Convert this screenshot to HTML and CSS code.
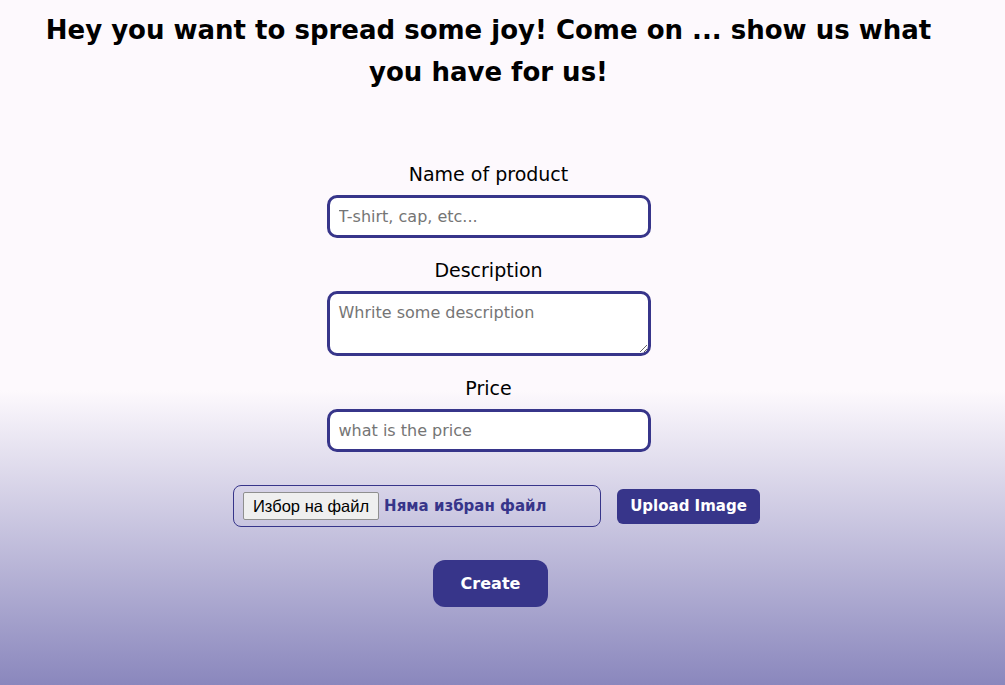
FILE: index.html
```html
<!DOCTYPE html>
<html lang="en">
<head>
<meta charset="utf-8">
<title>Create product</title>
<link rel="stylesheet" href="styles.css">
</head>
<body>
<main class="page">
  <h1 class="title">Hey you want to spread some joy! Come on ... show us what you have for us!</h1>
  <form class="form">
    <label class="label" for="name">Name of product</label>
    <input class="field" id="name" type="text" placeholder="T-shirt, cap, etc...">
    <label class="label label-gap" for="desc">Description</label>
    <textarea class="field area" id="desc" placeholder="Whrite some description"></textarea>
    <label class="label label-gap" for="price">Price</label>
    <input class="field" id="price" type="text" placeholder="what is the price">
    <div class="upload-row">
      <div class="file-box">
        <span class="file-btn">Избор на файл</span>
        <span class="file-name">Няма избран файл</span>
      </div>
      <button type="button" class="upload-btn">Upload Image</button>
    </div>
    <button type="button" class="create-btn">Create</button>
  </form>
</main>
</body>
</html>
```
FILE: styles.css
```css
html, body {
  margin: 0;
  padding: 0;
}
body {
  height: 685px;
  background: linear-gradient(to bottom, #fdf9fd 0%, #fdf9fd 57%, #8a87bd 100%);
  font-family: "Comic Sans MS", "DejaVu Sans", sans-serif;
  color: #000;
}
.page {
  width: 961px;
  margin-left: 8px;
  display: flex;
  flex-direction: column;
  align-items: center;
}
.title {
  margin: 9px 0 0;
  font-size: 26px;
  line-height: 42px;
  font-weight: bold;
  text-align: center;
  width: 930px;
}
.form {
  margin-top: 67px;
  display: flex;
  flex-direction: column;
  align-items: center;
}
.label {
  font-size: 19px;
  line-height: 28px;
  margin-bottom: 7px;
}
.label-gap {
  margin-top: 18px;
}
.field {
  box-sizing: border-box;
  width: 324px;
  height: 43px;
  border: 3px solid #37358a;
  border-radius: 10px;
  background: #fff;
  padding: 0 9px;
  font-family: inherit;
  font-size: 16px;
  color: #000;
  outline: none;
}
.field::placeholder {
  color: #757575;
}
.area {
  height: 65px;
  padding: 9px 9px;
  resize: vertical;
}
.upload-row {
  margin-top: 33px;
  display: flex;
  align-items: center;
  gap: 16px;
  margin-left: 16px;
}
.file-box {
  box-sizing: border-box;
  width: 368px;
  height: 42px;
  border: 1px solid #37358a;
  border-radius: 8px;
  display: flex;
  align-items: center;
  padding-left: 9px;
  gap: 5px;
}
.file-btn {
  box-sizing: border-box;
  height: 28px;
  padding: 0 9px;
  display: flex;
  align-items: center;
  font-family: "Liberation Sans", Arial, sans-serif;
  font-size: 16.5px;
  color: #000;
  background: #efefef;
  border: 1px solid #8f8f8f;
  border-radius: 2px;
}
.file-name {
  font-size: 15px;
  font-weight: bold;
  color: #37358a;
}
.upload-btn {
  height: 35px;
  width: 143px;
  padding: 0;
  border: none;
  border-radius: 6px;
  background: #37358a;
  color: #fff;
  font-family: inherit;
  font-size: 15px;
  font-weight: bold;
}
.create-btn {
  margin-top: 33px;
  margin-left: 4px;
  width: 115px;
  height: 47px;
  border: none;
  border-radius: 12px;
  background: #37358a;
  color: #fff;
  font-family: inherit;
  font-size: 16px;
  font-weight: bold;
}
```
